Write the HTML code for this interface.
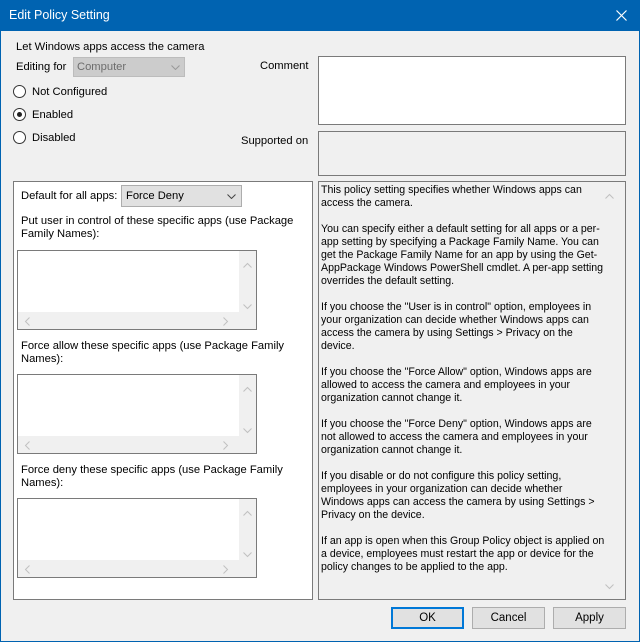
<!DOCTYPE html>
<html><head><meta charset="utf-8"><style>
*{margin:0;padding:0;box-sizing:border-box}
body{width:640px;height:642px;background:#f0f0f0;font-family:"Liberation Sans",sans-serif;font-size:11.2px;color:#000;position:relative;overflow:hidden}
.a{position:absolute;white-space:nowrap}
#win{position:absolute;left:0;top:0;width:640px;height:642px;border:1px solid #0063b1;border-top:none}
#title{position:absolute;left:0;top:0;width:640px;height:31px;background:#0063b1;color:#fff;font-size:12.5px}
.box{position:absolute;border:1px solid #7a7a7a;background:#fff}
.gray{background:#f0f0f0}
.radio{position:absolute;width:13px;height:13px;border:1px solid #333;border-radius:50%;background:#fff}
.dot{position:absolute;left:3px;top:3px;width:5px;height:5px;border-radius:50%;background:#222}
.ta .vs{position:absolute;right:0;top:0;width:17px;bottom:17px;background:#f0f0f0}
.ta .hs{position:absolute;left:0;right:0;bottom:0;height:17px;background:#f0f0f0}
svg.c{position:absolute}
.btn{position:absolute;height:22px;border:1px solid #adadad;background:#e1e1e1;text-align:center;line-height:20px;font-size:11.5px}
.txt{position:absolute;left:321px;top:184px;line-height:13px;white-space:pre;font-size:10.6px}
</style></head><body>
<div id="win"></div>
<div id="title"><span class="a" style="left:9px;top:8px">Edit Policy Setting</span>
<svg class="a" style="left:616px;top:10px" width="11" height="11"><path d="M0.5 0.5L10.5 10.5M10.5 0.5L0.5 10.5" stroke="#fff" stroke-width="1.2"/></svg></div>

<span class="a" style="left:16px;top:41px">Let Windows apps access the camera</span>
<span class="a" style="left:16px;top:61px">Editing for</span>
<div class="box" style="left:73px;top:57px;width:112px;height:20px;background:#ccc;border-color:#bcbcbc;color:#6d6d6d"><span class="a" style="left:3px;top:3px">Computer</span><svg class="c" style="left:97px;top:7px" width="9" height="5"><path d="M0.5 0.5L4.5 4.5L8.5 0.5" fill="none" stroke="#999"/></svg></div>

<div class="radio" style="left:13px;top:85px"></div><span class="a" style="left:32px;top:86px">Not Configured</span>
<div class="radio" style="left:13px;top:108px"><div class="dot"></div></div><span class="a" style="left:32px;top:109px">Enabled</span>
<div class="radio" style="left:13px;top:131px"></div><span class="a" style="left:32px;top:132px">Disabled</span>

<span class="a" style="left:260px;top:60px">Comment</span>
<div class="box" style="left:318px;top:56px;width:308px;height:69px"></div>
<span class="a" style="left:241px;top:135px">Supported on</span>
<div class="box gray" style="left:318px;top:131px;width:308px;height:45px"></div>

<div class="box" style="left:13px;top:181px;width:300px;height:419px">
<span class="a" style="left:7px;top:8px">Default for all apps:</span>
<div class="box" style="left:107px;top:3px;width:121px;height:22px;background:#e1e1e1;border-color:#adadad"><span class="a" style="left:4px;top:4px">Force Deny</span><svg class="c" style="left:105px;top:8px" width="9" height="5"><path d="M0.5 0.5L4.5 4.5L8.5 0.5" fill="none" stroke="#444"/></svg></div>
<span class="a" style="left:7px;top:33px;line-height:13px">Put user in control of these specific apps (use Package<br>Family Names):</span>
<span class="a" style="left:7px;top:158px;line-height:13px">Force allow these specific apps (use Package Family<br>Names):</span>
<span class="a" style="left:7px;top:282px;line-height:13px">Force deny these specific apps (use Package Family<br>Names):</span>
</div>

<div class="box ta" style="left:17px;top:250px;width:240px;height:80px"><div class="vs"></div><div class="hs"></div>
<svg class="c" style="left:0;top:0" width="238" height="78"><g fill="none" stroke="#c0c0c0"><path d="M225.5 16.5L229.5 12.5L233.5 16.5M225.5 53.5L229.5 57.5L233.5 53.5M11.5 66.5L7.5 70.5L11.5 74.5M205.5 66.5L209.5 70.5L205.5 74.5"/></g></svg></div>
<div class="box ta" style="left:17px;top:374px;width:240px;height:80px"><div class="vs"></div><div class="hs"></div>
<svg class="c" style="left:0;top:0" width="238" height="78"><g fill="none" stroke="#c0c0c0"><path d="M225.5 16.5L229.5 12.5L233.5 16.5M225.5 53.5L229.5 57.5L233.5 53.5M11.5 66.5L7.5 70.5L11.5 74.5M205.5 66.5L209.5 70.5L205.5 74.5"/></g></svg></div>
<div class="box ta" style="left:17px;top:498px;width:240px;height:80px"><div class="vs"></div><div class="hs"></div>
<svg class="c" style="left:0;top:0" width="238" height="78"><g fill="none" stroke="#c0c0c0"><path d="M225.5 16.5L229.5 12.5L233.5 16.5M225.5 53.5L229.5 57.5L233.5 53.5M11.5 66.5L7.5 70.5L11.5 74.5M205.5 66.5L209.5 70.5L205.5 74.5"/></g></svg></div>

<div class="box gray" style="left:318px;top:181px;width:308px;height:419px">
<svg class="c" style="left:0;top:0" width="306" height="417"><g fill="none" stroke="#c0c0c0"><path d="M286.5 16.5L290.5 12.5L294.5 16.5M286.5 402.5L290.5 406.5L294.5 402.5"/></g></svg></div>
<div class="txt">This policy setting specifies whether Windows apps can
access the camera.

You can specify either a default setting for all apps or a per-
app setting by specifying a Package Family Name. You can
get the Package Family Name for an app by using the Get-
AppPackage Windows PowerShell cmdlet. A per-app setting
overrides the default setting.

If you choose the "User is in control" option, employees in
your organization can decide whether Windows apps can
access the camera by using Settings &gt; Privacy on the
device.

If you choose the "Force Allow" option, Windows apps are
allowed to access the camera and employees in your
organization cannot change it.

If you choose the "Force Deny" option, Windows apps are
not allowed to access the camera and employees in your
organization cannot change it.

If you disable or do not configure this policy setting,
employees in your organization can decide whether
Windows apps can access the camera by using Settings &gt;
Privacy on the device.

If an app is open when this Group Policy object is applied on
a device, employees must restart the app or device for the
policy changes to be applied to the app.</div>

<div class="btn" style="left:391px;top:607px;width:73px;border:2px solid #0078d7;line-height:18px">OK</div>
<div class="btn" style="left:472px;top:607px;width:73px">Cancel</div>
<div class="btn" style="left:553px;top:607px;width:73px">Apply</div>
</body></html>
